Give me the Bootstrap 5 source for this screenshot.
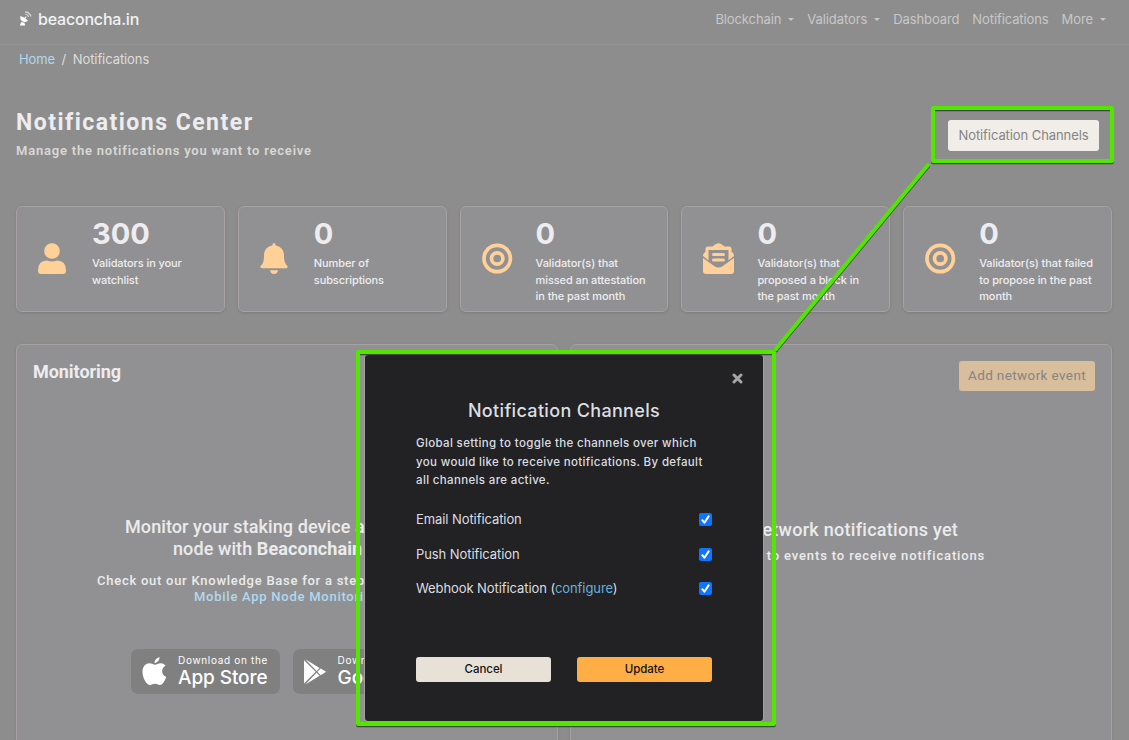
<!DOCTYPE html>
<html lang="en">
<head>
<meta charset="utf-8">
<meta name="viewport" content="width=device-width, initial-scale=1">
<title>Notifications - beaconcha.in</title>
<link href="https://cdn.jsdelivr.net/npm/bootstrap@5.3.0/dist/css/bootstrap.min.css" rel="stylesheet">
<style>
  body { font-family: Inter, "Liberation Sans", sans-serif; font-size: 13px; color: #ebebec; background: #8d8d8d; height: 740px; overflow: hidden; position: relative; letter-spacing: -.08px; }
  a { text-decoration: none; color: #b0d8ee; }
  .topbar { height: 45px; padding: 0 23px 5px 19px; border-bottom: 1px solid #949494; }
  .brand { font-size: 16px; font-weight: 500; color: #f2f2f3; letter-spacing: -.2px; gap: 6px; line-height: 22px; padding-bottom: 2px; }
  .menu { gap: 13px; color: #c8c8c8; font-size: 13px; padding-top: 1px; letter-spacing: -.1px; }
  .menu .dropdown-toggle::after { margin-left: 7px; border-width: 3px 3px 0; vertical-align: 3px; }
  .crumbs { height: 29px; padding-left: 19px; gap: 6.5px; color: #dedddb; }
  .heading-font { font-family: Roboto, "Open Sans", sans-serif; font-weight: 600; }
  .page-head { margin: 32px 16px 0; height: 100px; }
  .page-title { font-size: 23px; letter-spacing: 1.48px; line-height: 28px; margin: 3px 0 5px; font-weight: 700; color: #ededf0; }
  .page-sub { font-size: 13px; letter-spacing: .79px; line-height: 17px; color: #d9d8d5; margin: 0; }
  .btn-flat { border: 0; border-radius: 3px; padding: 0; font-size: 13px; line-height: 1; }
  .btn-channels { width: 151px; height: 31px; margin: 14px 14px 0 0; background: #f1eeea; color: #858483; letter-spacing: -.08px; }
  .stats { margin: 0 17px 0 16px; gap: 13px; }
  .stat { flex: 1 1 0; height: 106px; border: 1px solid #a7a2a2; border-radius: 6px; background: #919193; box-shadow: 0 1px 3px rgba(60,60,60,.2); padding-left: 20px; }
  .stat svg { width: 32px; height: 32px; fill: #ffd198; flex: none; margin-top: 36px; }
  .stat-body { margin-left: 23px; padding-top: 9px; font-size: 11px; line-height: 16.5px; letter-spacing: -.09px; font-weight: 500; white-space: nowrap; color: #ededf0; }
  .stat-num { font-size: 29px; line-height: 36px; font-weight: 700; margin-bottom: 3px; letter-spacing: 0; }
  .panels { margin: 32px 17px 0 16px; gap: 12px; }
  .panel { flex: 1 1 0; height: 420px; border: 1px solid #a7a2a2; border-radius: 6px; background: #919193; box-shadow: 0 1px 3px rgba(60,60,60,.2); white-space: nowrap; padding: 16px; }
  .panel-title { font-size: 18px; line-height: 22px; letter-spacing: -.05px; margin: 0; font-weight: 700; color: #ededf0; }
  .btn-event { width: 136px; height: 30px; background: #d8be9d; color: #858483; font-weight: 400; font-size: 13.5px; letter-spacing: .38px; }
  .empty-title { font-size: 18px; line-height: 22px; letter-spacing: .27px; font-weight: 500; }
  .empty-sub { font-size: 13px; line-height: 16px; letter-spacing: .86px; font-weight: 500; }
  .intro .empty-title { letter-spacing: .09px; margin-left: 92px; }
  .intro .empty-sub { letter-spacing: .74px; margin: 13px 0 0 64px; }
  .intro .second { display: block; margin-left: 48px; }
  .intro .empty-sub .second { margin-left: 97px; }
  .store { height: 45px; border-radius: 7px; background: #808080; color: #fff; padding: 4px 0 0 11px; }
  .store-a { width: 149px; } .store-g { width: 152px; }
  .store-small { font-size: 10px; line-height: 15px; letter-spacing: .68px; }
  .store-big { font-size: 19px; line-height: 20px; font-weight: 500; letter-spacing: -.08px; }
  .dialog { position: absolute; left: 365px; top: 355px; width: 398px; height: 366px; background: #222123; border-radius: 3px; padding: 17px 51px 0; box-shadow: 0 0 0 1px #a0a0a0; color: #dcdee2; z-index: 2; }
  .dialog-close { position: absolute; right: 20px; top: 18px; width: 11px; height: 11px; }
  .dialog-title { font-size: 18px; line-height: 22px; letter-spacing: .33px; font-weight: 500; margin: 28px 0 12px; }
  .dialog-text { font-size: 11.5px; line-height: 18.5px; letter-spacing: .35px; font-weight: 500; margin: 0; white-space: nowrap; }
  .channel { height: 34.5px; }
  .channel a { color: #66b1df; }
  .channel .form-check-input { width: 13px; height: 13px; margin: 0; border-radius: 2px; border: 0; background-color: #0d75ff; background-size: 13px; background-image: url("data:image/svg+xml,%3csvg xmlns='http://www.w3.org/2000/svg' viewBox='0 0 13 13'%3e%3cpath fill='none' stroke='%23fff' stroke-width='2' stroke-linecap='round' stroke-linejoin='round' d='M3.3 7.2 5.4 9.7 9.6 3.4'/%3e%3c/svg%3e"); }
  .dialog .btn-flat { width: 135px; height: 25px; font-size: 11.5px; color: #111; letter-spacing: -.05px; font-weight: 500; }
  .btn-cancel { background: #e8e1d8; } .btn-update { background: #ffae45; }
  .callouts { position: absolute; left: 0; top: 0; z-index: 3; pointer-events: none; }
</style>
</head>
<body>
<nav class="topbar d-flex align-items-center justify-content-between">
  <div class="brand d-flex align-items-center">
    <svg width="13" height="15" viewBox="0 0 13 15"><path fill="#fff" d="M1.600 5C.2 8 2.800 11 6 11.200L9 9.800 6.300 7.300 7.800 6 7 5.200 5.500 6.700ZM.8 14.500 2.300 11 5.500 12 6.200 14.500Z"/><path fill="none" stroke="#d2d2d2" stroke-width="1.300" d="M6 1Q10.500 1 12 5.500M6.500 3.200Q9 3.400 9.700 5.800"/></svg>
    <span>beaconcha.in</span>
  </div>
  <div class="menu d-flex">
    <span class="dropdown-toggle">Blockchain</span><span class="dropdown-toggle">Validators</span><span>Dashboard</span><span>Notifications</span><span class="dropdown-toggle">More</span>
  </div>
</nav>
<div class="crumbs d-flex align-items-center"><a href="#">Home</a><span>/</span><span>Notifications</span></div>
<header class="page-head d-flex justify-content-between align-items-start">
  <div>
    <h1 class="page-title heading-font">Notifications Center</h1>
    <p class="page-sub heading-font">Manage the notifications you want to receive</p>
  </div>
  <button class="btn btn-flat btn-channels">Notification Channels</button>
</header>
<section class="stats d-flex">
  <div class="stat d-flex"><svg viewBox="0 0 32 32"><circle cx="15" cy="8" r="7.800"/><path d="M1 27.500Q1 17.500 10 17.500 15 19.500 20 17.500 29 17.500 29 27.500 29 31 26 31H4Q1 31 1 27.500Z"/></svg>
    <div class="stat-body"><div class="stat-num">300</div>Validators in your<br>watchlist</div></div>
  <div class="stat d-flex"><svg viewBox="0 0 32 32"><path d="M15 0Q16.700 0 16.700 2.500C22 3.500 25 7 25 12.500 25 18.500 26 20.500 28 22.500 29.500 24.500 28 25.300 27 25.300H3Q.2 25 2 22.500C4 20.500 5 18.500 5 12.500 5 7 8 3.500 13.300 2.500Q13.300 0 15 0ZM11 27.300H19Q18.500 31 15 31 11.500 31 11 27.300Z"/></svg>
    <div class="stat-body"><div class="stat-num">0</div>Number of<br>subscriptions</div></div>
  <div class="stat d-flex"><svg viewBox="0 0 32 32"><g fill="none" stroke="#ffd198" stroke-width="3.700"><circle cx="16.200" cy="15.500" r="13.200"/><circle cx="16.200" cy="15.500" r="5.700"/></g></svg>
    <div class="stat-body"><div class="stat-num">0</div>Validator(s) that<br>missed an attestation<br>in the past month</div></div>
  <div class="stat d-flex"><svg viewBox="0 0 32 32"><path d="M1 15 12.500 23.200Q16.500 26 20.500 23.200L32 15V28Q32 31 29 31H4Q1 31 1 28Z"/><path fill-rule="evenodd" d="M1 13Q1 10.500 3.500 8.500V6Q3.500 3.500 6 3.500H10.500Q14.500 .2 16.500 .2T22.500 3.500H27Q29.500 3.500 29.500 6V8.500Q32 10.500 32 13L26.500 17.500V7H6.500V17.500Z"/><path d="M11.500 10H21.500Q23 10 23 11.500T21.500 13H11.500Q10 13 10 11.500T11.500 10ZM11.500 15.500H21.500Q23 15.500 23 17T21.500 18.500H11.500Q10 18.500 10 17T11.500 15.500Z"/></svg>
    <div class="stat-body"><div class="stat-num">0</div>Validator(s) that<br>proposed a block in<br>the past month</div></div>
  <div class="stat d-flex"><svg viewBox="0 0 32 32"><g fill="none" stroke="#ffd198" stroke-width="3.700"><circle cx="16.200" cy="15.500" r="13.200"/><circle cx="16.200" cy="15.500" r="5.700"/></g></svg>
    <div class="stat-body"><div class="stat-num">0</div>Validator(s) that failed<br>to propose in the past<br>month</div></div>
</section>
<section class="panels d-flex">
  <div class="panel">
    <h2 class="panel-title heading-font">Monitoring</h2>
    <div class="intro heading-font" style="margin-top:133px">
      <div class="empty-title">Monitor your staking device and<span class="second">node with <b>Beaconchain</b></span></div>
      <div class="empty-sub">Check out our Knowledge Base for a step<a class="second" href="#">Mobile App Node Monitoring</a></div>
    </div>
    <div class="d-flex" style="margin:44px 0 0 98px;gap:13px">
      <div class="store store-a d-flex">
        <svg width="26" height="32" viewBox="0 0 26 32" style="margin-top:2px"><path fill="#fff" d="M17.500 2Q17.800 6.500 12.500 8.200 12.300 4 17.500 2ZM13 9.700C15 9.700 16 8.200 18.800 8.200 21 8.200 22.500 9.200 23.500 10.600 18.200 14 19.700 20.300 24.200 22C22.500 26.500 20.300 30 18 30 16 30 15 28.800 13 28.800S9.800 30 8 30C4.500 30 .5 23 .5 16.800.5 11.500 3.800 8.300 7.400 8.300 10 8.300 11.500 9.700 13 9.700Z"/></svg>
        <div class="text-start" style="margin-left:10px"><div class="store-small">Download on the</div><div class="store-big">App Store</div></div>
      </div>
      <div class="store store-g d-flex">
        <svg width="26" height="32" viewBox="0 0 26 32" style="margin-top:2px"><path fill="#fff" d="M0 3.500V30.500L13.500 17ZM1.500 2.500 14.500 16 18 12.500ZM1.500 31.500 14.500 18 18 21.500ZM19.300 13 15.300 17 19.300 21 25.500 17Z"/></svg>
        <div style="margin-left:11px"><div class="store-small">Download on</div><div class="store-big">Google Play</div></div>
      </div>
    </div>
  </div>
  <div class="panel">
    <div class="d-flex justify-content-end"><button class="btn btn-flat btn-event heading-font fw-normal">Add network event</button></div>
    <div class="text-center heading-font" style="margin-top:128px">
      <div class="empty-title">No network notifications yet</div>
      <div class="empty-sub" style="margin-top:7px">Subscribe to events to receive notifications</div>
    </div>
  </div>
</section>

<div class="dialog">
  <svg class="dialog-close" viewBox="0 0 11 11"><path d="M2 2 9 9M9 2 2 9" stroke="#a5a5a7" stroke-width="3" stroke-linecap="round"/></svg>
  <h2 class="dialog-title text-center">Notification Channels</h2>
  <p class="dialog-text">Global setting to toggle the channels over which<br>you would like to receive notifications. By default<br>all channels are active.</p>
  <div style="margin-top:13px">
    <label class="channel d-flex align-items-center justify-content-between">Email Notification<input class="form-check-input" type="checkbox" checked></label>
    <label class="channel d-flex align-items-center justify-content-between">Push Notification<input class="form-check-input" type="checkbox" checked></label>
    <label class="channel d-flex align-items-center justify-content-between"><span>Webhook Notification (<a href="#">configure</a>)</span><input class="form-check-input" type="checkbox" checked></label>
  </div>
  <div class="d-flex justify-content-between" style="margin-top:51px"><button class="btn btn-flat btn-cancel">Cancel</button><button class="btn btn-flat btn-update">Update</button></div>
</div>

<!-- highlight frames and the connector between them -->
<svg class="callouts" width="1129" height="740" fill="none" stroke-width="4" stroke-linejoin="round" stroke-linecap="round">
  <g stroke="#3d4a3d" transform="translate(0 1.200)"><rect x="933" y="108" width="179" height="53"/><rect x="358" y="352" width="416" height="372"/><path d="M928 165 776 349"/></g>
  <g stroke="#52e600"><rect x="933" y="108" width="179" height="53"/><rect x="358" y="352" width="416" height="372"/><path d="M928 165 776 349"/></g>
</svg>
<script src="https://cdn.jsdelivr.net/npm/bootstrap@5.3.0/dist/js/bootstrap.bundle.min.js"></script>
</body>
</html>
